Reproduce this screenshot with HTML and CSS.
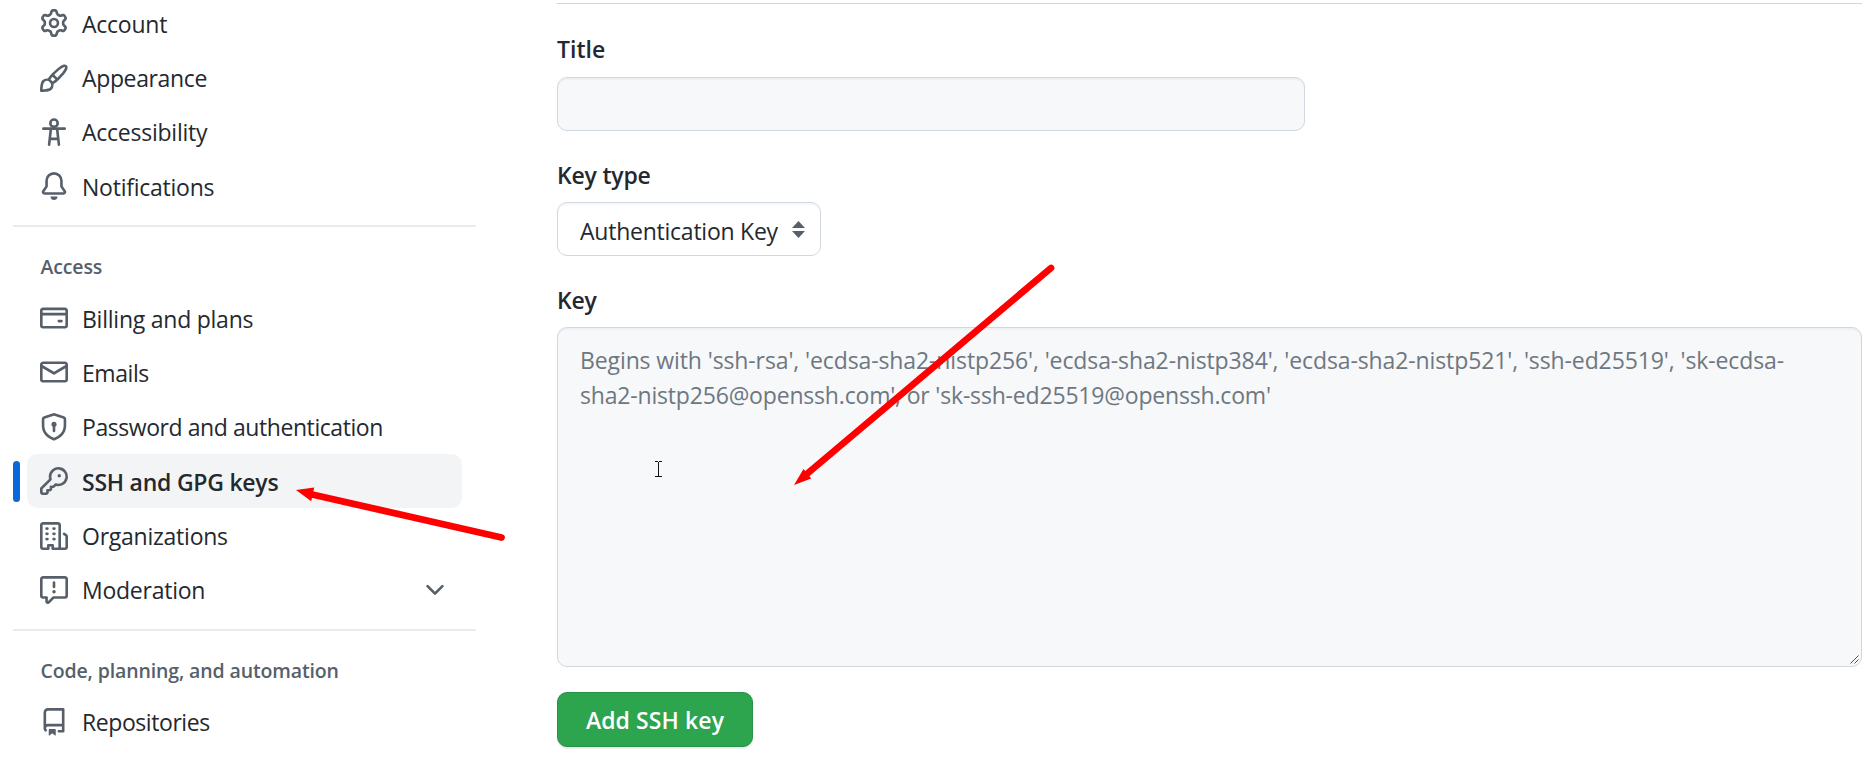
FILE: index.html
```html
<!DOCTYPE html>
<html lang="en">
<head>
<meta charset="utf-8">
<title>SSH and GPG keys</title>
<link rel="stylesheet" href="styles.css">
</head>
<body>
<div class="page">
  <nav class="sidebar">
    <ul class="nav-list">
      <li class="nav-item"><svg class="icon" viewBox="0 0 16 16"><path d="M8 0a8.2 8.2 0 0 1 .701.031C9.444.095 9.99.645 10.16 1.29l.288 1.107c.018.066.079.158.212.224.231.114.454.243.668.386.123.082.233.09.299.071l1.103-.303c.644-.176 1.392.021 1.82.63.27.385.506.792.704 1.218.315.675.111 1.422-.364 1.891l-.814.806c-.049.048-.098.147-.088.294.016.257.016.515 0 .772-.01.147.038.246.088.294l.814.806c.475.469.679 1.216.364 1.891a7.977 7.977 0 0 1-.704 1.217c-.428.61-1.176.807-1.82.63l-1.102-.302c-.067-.019-.177-.011-.3.071a5.909 5.909 0 0 1-.668.386c-.133.066-.194.158-.211.224l-.29 1.106c-.168.646-.715 1.196-1.458 1.26a8.006 8.006 0 0 1-1.402 0c-.743-.064-1.289-.614-1.458-1.26l-.289-1.106c-.018-.066-.079-.158-.212-.224a5.738 5.738 0 0 1-.668-.386c-.123-.082-.233-.09-.299-.071l-1.103.303c-.644.176-1.392-.021-1.82-.63a8.12 8.12 0 0 1-.704-1.218c-.315-.675-.111-1.422.363-1.891l.815-.806c.05-.048.098-.147.088-.294a6.214 6.214 0 0 1 0-.772c.01-.147-.038-.246-.088-.294l-.815-.806C.635 6.045.431 5.298.746 4.623a7.92 7.92 0 0 1 .704-1.217c.428-.61 1.176-.807 1.82-.63l1.102.302c.067.019.177.011.3-.071.214-.143.437-.272.668-.386.133-.066.194-.158.211-.224l.29-1.106C6.009.645 6.556.095 7.299.03 7.53.01 7.764 0 8 0Zm-.571 1.525c-.036.003-.108.036-.137.146l-.289 1.105c-.147.561-.549.967-.998 1.189-.173.086-.34.183-.5.29-.417.278-.97.423-1.529.27l-1.103-.303c-.109-.03-.175.016-.195.045-.22.312-.412.644-.573.99-.014.031-.021.11.059.19l.815.806c.411.406.562.957.53 1.456a4.709 4.709 0 0 0 0 .582c.032.499-.119 1.05-.53 1.456l-.815.806c-.081.08-.073.159-.059.19.162.346.353.677.573.989.02.03.085.076.195.046l1.102-.303c.56-.153 1.113-.008 1.53.27.161.107.328.204.501.29.447.222.85.629.997 1.189l.289 1.105c.029.109.101.143.137.146a6.6 6.6 0 0 0 1.142 0c.036-.003.108-.036.137-.146l.289-1.105c.147-.561.549-.967.998-1.189.173-.086.34-.183.5-.29.417-.278.97-.423 1.529-.27l1.103.303c.109.029.175-.016.195-.045.22-.313.411-.644.573-.99.014-.031.021-.11-.059-.19l-.815-.806c-.411-.406-.562-.957-.53-1.456a4.709 4.709 0 0 0 0-.582c-.032-.499.119-1.05.53-1.456l.815-.806c.081-.08.073-.159.059-.19a6.464 6.464 0 0 0-.573-.989c-.02-.03-.085-.076-.195-.046l-1.102.303c-.56.153-1.113.008-1.53-.27a4.44 4.44 0 0 0-.501-.29c-.447-.222-.85-.629-.997-1.189l-.289-1.105c-.029-.11-.101-.143-.137-.146a6.6 6.6 0 0 0-1.142 0ZM11 8a3 3 0 1 1-6 0 3 3 0 0 1 6 0ZM9.5 8a1.5 1.5 0 1 0-3.001.001A1.5 1.5 0 0 0 9.5 8Z"/></svg><span class="text">Account</span></li>
      <li class="nav-item"><svg class="icon" viewBox="0 0 16 16"><path d="M11.134 1.535c.7-.509 1.416-.942 2.076-1.155.649-.21 1.463-.267 2.069.34.603.601.568 1.411.368 2.07-.202.668-.624 1.39-1.125 2.096-1.011 1.424-2.496 2.987-3.775 4.249-1.098 1.084-2.132 1.839-3.04 2.3a3.744 3.744 0 0 1-1.055 3.217c-.431.431-1.065.691-1.657.861-.614.177-1.294.287-1.914.357A21.151 21.151 0 0 1 .797 16H.743l.007-.75H.749L.742 16a.75.75 0 0 1-.743-.742l.743-.008-.742.007v-.054a21.25 21.25 0 0 1 .13-2.284c.067-.647.187-1.287.358-1.914.17-.591.43-1.226.86-1.657a3.746 3.746 0 0 1 3.227-1.054c.466-.893 1.225-1.907 2.314-2.982 1.271-1.255 2.833-2.75 4.246-3.777ZM1.62 13.089c-.051.464-.086.929-.104 1.395.466-.018.932-.053 1.396-.104a10.511 10.511 0 0 0 1.668-.309c.526-.151.856-.325 1.011-.48a2.25 2.25 0 1 0-3.182-3.182c-.155.155-.329.485-.48 1.01a10.515 10.515 0 0 0-.309 1.67Zm10.396-10.34c-1.224.89-2.605 2.189-3.822 3.384l1.718 1.718c1.21-1.205 2.51-2.597 3.387-3.833.47-.662.78-1.227.912-1.662.134-.444.032-.551.009-.575h-.001V1.78c-.014-.014-.113-.113-.548.027-.432.14-.995.462-1.655.942Zm-4.832 7.266-.001.001a9.859 9.859 0 0 0 1.63-1.142L7.155 7.216a9.7 9.7 0 0 0-1.161 1.607c.482.302.889.71 1.19 1.192Z"/></svg><span class="text text-snug">Appearance</span></li>
      <li class="nav-item"><svg class="icon icon-stroke" viewBox="0 0 16 16"><circle cx="8" cy="2.95" r="2.1"/><path d="M1.9 6.1h12.2M6.2 6.3 5.2 15.2M9.8 6.3l1 8.9M5.8 11.9h4.4"/></svg><span class="text">Accessibility</span></li>
      <li class="nav-item"><svg class="icon" viewBox="0 0 16 16"><path d="M8 16a2 2 0 0 0 1.985-1.75c.017-.137-.097-.25-.235-.25h-3.5c-.138 0-.252.113-.235.25A2 2 0 0 0 8 16ZM3 5a5 5 0 0 1 10 0v2.947c0 .05.015.098.042.139l1.703 2.555A1.519 1.519 0 0 1 13.482 13H2.518a1.516 1.516 0 0 1-1.263-2.36l1.703-2.554A.255.255 0 0 0 3 7.947Zm5-3.5A3.5 3.5 0 0 0 4.5 5v2.947c0 .346-.102.683-.294.97l-1.703 2.556a.017.017 0 0 0-.003.01l.001.006c0 .002.002.004.004.006l.006.004.007.001h10.964l.007-.001.006-.004.004-.006.001-.007a.017.017 0 0 0-.003-.01l-1.703-2.554a1.745 1.745 0 0 1-.294-.97V5A3.5 3.5 0 0 0 8 1.5Z"/></svg><span class="text">Notifications</span></li>
    </ul>
    <hr class="divider">
    <h3 class="nav-heading">Access</h3>
    <ul class="nav-list">
      <li class="nav-item"><svg class="icon" viewBox="0 0 16 16"><path d="M10.75 9a.75.75 0 0 0 0 1.5h1.5a.75.75 0 0 0 0-1.5h-1.5Z"/><path d="M0 3.75C0 2.784.784 2 1.75 2h12.5c.966 0 1.75.784 1.75 1.75v8.5A1.75 1.75 0 0 1 14.25 14H1.75A1.75 1.75 0 0 1 0 12.25ZM14.5 6.5h-13v5.75c0 .138.112.25.25.25h12.5a.25.25 0 0 0 .25-.25Zm0-2.75a.25.25 0 0 0-.25-.25H1.75a.25.25 0 0 0-.25.25V5h13Z"/></svg><span class="text">Billing and plans</span></li>
      <li class="nav-item"><svg class="icon" viewBox="0 0 16 16"><path d="M1.75 2h12.5c.966 0 1.75.784 1.75 1.75v8.5A1.75 1.75 0 0 1 14.25 14H1.75A1.75 1.75 0 0 1 0 12.25v-8.5C0 2.784.784 2 1.75 2ZM1.5 5.809v6.442c0 .138.112.25.25.25h12.5a.25.25 0 0 0 .25-.25V5.809L8.38 9.397a.75.75 0 0 1-.76 0L1.5 5.809Zm13-1.74v-.32a.25.25 0 0 0-.25-.25H1.75a.25.25 0 0 0-.25.25v.32L8 7.88Z"/></svg><span class="text text-tight">Emails</span></li>
      <li class="nav-item"><svg class="icon" viewBox="0 0 16 16"><path d="m8.533.133 5.25 1.68A1.75 1.75 0 0 1 15 3.48V7c0 1.566-.32 3.182-1.303 4.682-.983 1.498-2.585 2.813-5.032 3.855a1.697 1.697 0 0 1-1.33 0c-2.447-1.042-4.049-2.357-5.032-3.855C1.32 10.182 1 8.566 1 7V3.48a1.755 1.755 0 0 1 1.217-1.667l5.25-1.68a1.748 1.748 0 0 1 1.066 0Zm-.61 1.429.001.001-5.25 1.68a.251.251 0 0 0-.174.237V7c0 1.36.275 2.666 1.057 3.859.784 1.194 2.121 2.342 4.366 3.298a.196.196 0 0 0 .154 0c2.245-.957 3.582-2.103 4.366-3.297C13.225 9.666 13.5 8.358 13.5 7V3.48a.25.25 0 0 0-.174-.238l-5.25-1.68a.25.25 0 0 0-.153 0ZM9.5 6.5c0 .536-.286 1.032-.75 1.3v2.45a.75.75 0 0 1-1.5 0V7.8A1.5 1.5 0 1 1 9.5 6.5Z"/></svg><span class="text text-tight">Password and authentication</span></li>
      <li class="nav-item nav-item-active"><svg class="icon" viewBox="0 0 16 16"><path d="M10.5 0a5.499 5.499 0 1 1-1.288 10.848l-.932.932a.749.749 0 0 1-.53.22H7v.75a.749.749 0 0 1-.22.53l-.5.5a.749.749 0 0 1-.53.22H5v.75a.749.749 0 0 1-.22.53l-.5.5a.749.749 0 0 1-.53.22h-2A1.75 1.75 0 0 1 0 14.25v-2c0-.199.079-.389.22-.53l4.932-4.932A5.5 5.5 0 0 1 10.5 0Zm-4 5.5c-.001.431.069.86.205 1.269a.75.75 0 0 1-.181.768L1.5 12.56v1.69c0 .138.112.25.25.25h1.69l.06-.06v-1.19a.75.75 0 0 1 .75-.75h1.19l.06-.06v-1.19a.75.75 0 0 1 .75-.75h1.19l1.023-1.025a.75.75 0 0 1 .768-.18A4 4 0 1 0 6.5 5.5ZM11 6a1 1 0 1 1 0-2 1 1 0 0 1 0 2Z"/></svg><span class="text">SSH and GPG keys</span></li>
      <li class="nav-item"><svg class="icon" viewBox="0 0 16 16"><path d="M1.75 16A1.75 1.75 0 0 1 0 14.25V1.75C0 .784.784 0 1.75 0h8.5C11.216 0 12 .784 12 1.75v12.5c0 .085-.006.168-.018.25h2.268a.25.25 0 0 0 .25-.25V8.285a.25.25 0 0 0-.111-.208l-1.055-.703a.749.749 0 1 1 .832-1.248l1.055.703c.487.325.779.871.779 1.456v5.965A1.75 1.75 0 0 1 14.25 16h-3.5a.766.766 0 0 1-.197-.026c-.099.017-.2.026-.303.026h-3a.75.75 0 0 1-.75-.75V14h-1v1.25a.75.75 0 0 1-.75.75Zm-.25-1.75c0 .138.112.25.25.25H4v-1.25a.75.75 0 0 1 .75-.75h2.5a.75.75 0 0 1 .75.75v1.25h2.25a.25.25 0 0 0 .25-.25V1.75a.25.25 0 0 0-.25-.25h-8.5a.25.25 0 0 0-.25.25ZM3.75 6h.5a.75.75 0 0 1 0 1.5h-.5a.75.75 0 0 1 0-1.5ZM3 3.75A.75.75 0 0 1 3.75 3h.5a.75.75 0 0 1 0 1.5h-.5A.75.75 0 0 1 3 3.75Zm4 3A.75.75 0 0 1 7.75 6h.5a.75.75 0 0 1 0 1.5h-.5A.75.75 0 0 1 7 6.75ZM7.75 3h.5a.75.75 0 0 1 0 1.5h-.5a.75.75 0 0 1 0-1.5ZM3 9.75A.75.75 0 0 1 3.75 9h.5a.75.75 0 0 1 0 1.5h-.5A.75.75 0 0 1 3 9.75ZM7.75 9h.5a.75.75 0 0 1 0 1.5h-.5a.75.75 0 0 1 0-1.5Z"/></svg><span class="text">Organizations</span></li>
      <li class="nav-item"><svg class="icon" viewBox="0 0 16 16"><path d="M0 1.75C0 .784.784 0 1.75 0h12.5C15.216 0 16 .784 16 1.75v9.5A1.75 1.75 0 0 1 14.25 13H8.06l-2.573 2.573A1.458 1.458 0 0 1 3 14.543V13H1.75A1.75 1.75 0 0 1 0 11.25Zm1.75-.25a.25.25 0 0 0-.25.25v9.5c0 .138.112.25.25.25h2a.75.75 0 0 1 .75.75v2.19l2.72-2.72a.749.749 0 0 1 .53-.22h6.5a.25.25 0 0 0 .25-.25v-9.5a.25.25 0 0 0-.25-.25Zm7 2.25v2.5a.75.75 0 0 1-1.5 0v-2.5a.75.75 0 0 1 1.5 0ZM9 9a1 1 0 1 1-2 0 1 1 0 0 1 2 0Z"/></svg><span class="text">Moderation</span><svg class="icon chevron" viewBox="0 0 16 16"><path d="M12.78 5.22a.749.749 0 0 1 0 1.06l-4.25 4.25a.749.749 0 0 1-1.06 0L3.22 6.28a.749.749 0 1 1 1.06-1.06L8 8.939l3.72-3.719a.749.749 0 0 1 1.06 0Z"/></svg></li>
    </ul>
    <hr class="divider">
    <h3 class="nav-heading">Code, planning, and automation</h3>
    <ul class="nav-list">
      <li class="nav-item"><svg class="icon" viewBox="0 0 16 16"><path d="M2 2.5A2.5 2.5 0 0 1 4.5 0h8.75a.75.75 0 0 1 .75.75v12.5a.75.75 0 0 1-.75.75h-2.5a.75.75 0 0 1 0-1.5h1.75v-2h-8a1 1 0 0 0-.714 1.7.75.75 0 1 1-1.072 1.05A2.495 2.495 0 0 1 2 11.5Zm10.500-1h-8a1 1 0 0 0-1 1v6.708A2.486 2.486 0 0 1 4.500 9h8ZM5 12.250a.25.25 0 0 1 .25-.25h3.500a.25.25 0 0 1 .25.25v3.250a.25.25 0 0 1-.4.2l-1.450-1.087a.249.249 0 0 0-.3 0L5.400 15.700a.25.25 0 0 1-.4-.2Z"/></svg><span class="text text-tight">Repositories</span></li>
    </ul>
  </nav>
  <main class="content">
    <div class="label label-first">Title</div>
    <div class="text-input"></div>
    <div class="label">Key type</div>
    <div class="select"><span class="text">Authentication Key</span>
      <svg class="select-arrows" viewBox="0 0 13 17"><path d="M6.5 0 13 7H0ZM6.5 17 0 10h13Z"/></svg></div>
    <div class="label">Key</div>
    <div class="textarea"><span class="hint">Begins with 'ssh-rsa', 'ecdsa-sha2-nistp256', 'ecdsa-sha2-nistp384', 'ecdsa-sha2-nistp521', 'ssh-ed25519', 'sk-ecdsa-</span><br><span class="hint hint-last">sha2-nistp256@openssh.com', or 'sk-ssh-ed25519@openssh.com'</span>
      <svg class="grip" viewBox="0 0 9 9"><path d="M.5 8.500l8-8M4.500 8.500l4-4"/></svg></div>
    <button class="submit" type="button">Add SSH key</button>
  </main>
  <svg class="overlay" viewBox="0 0 1863 760">
    <path class="arrow-line" d="M501.500 537.500 310 494M1051 268 805 475.500"/>
    <path class="arrow-head" d="M296 490l18.200-2.500-3 13.700ZM794 485l9.500-16 7.800 9.500Z"/>
    <path class="cursor" d="M655 461.500h3M659 461.500h3M658.500 462v15M655 476.500h3M659 476.500h3"/>
  </svg>
</div>
</body>
</html>
```

FILE: styles.css
```css
* { box-sizing: border-box; }
body {
  margin: 0;
  background: #fff;
  color: #24292f;
  font-family: "Open Sans", "Noto Sans", sans-serif;
  font-size: 23px;
}
.page {
  position: relative;
  display: flex;
  width: 1863px;
  height: 760px;
  overflow: hidden;
}
.sidebar { width: 557px; padding-left: 13px; }
.nav-list { margin: 0; padding: 0 0 0 14px; list-style: none; }
.nav-list:first-child { margin-top: -4px; }
.nav-item {
  position: relative;
  display: flex;
  align-items: center;
  width: 435px;
  height: 54.35px;
  padding: 0 13px;
  gap: 14px;
  border-radius: 10px;
  white-space: nowrap;
}
.text { padding-top: 1px; letter-spacing: -0.24px; }
.text-snug { letter-spacing: -0.36px; }
.text-tight { letter-spacing: -0.43px; }
.nav-item-active { background: #f3f4f6; font-weight: 600; }
.nav-item-active::before {
  content: "";
  position: absolute;
  left: -14px;
  top: 7px;
  width: 7px;
  height: 41px;
  border-radius: 4px;
  background: #0969da;
}
.icon { width: 28px; height: 28px; fill: #57606a; flex: none; }
.icon-stroke { fill: none; stroke: #57606a; stroke-width: 1.5; stroke-linecap: round; }
.chevron { margin-left: auto; }
.divider { width: 463px; height: 2px; margin: 12px 0 0; border: 0; background: #e8ecf0; }
.nav-heading {
  height: 63.6px;
  margin: 0;
  padding: 24px 0 0 27.5px;
  color: #57606a;
  font-size: 19.5px;
  font-weight: 600;
  line-height: 32px;
  letter-spacing: -0.13px;
}
.content { width: 1305px; margin-top: 3px; border-top: 1px solid #d0d7de; }
.label {
  height: 71px;
  padding-top: 27px;
  font-weight: 600;
  line-height: 34px;
  letter-spacing: -0.2px;
}
.label-first { height: 73px; padding-top: 28px; letter-spacing: 0; }
.text-input, .select, .textarea {
  border: 1px solid #d0d7de;
  border-radius: 10px;
  background: #f6f8fa;
  box-shadow: inset 0 2px 0 rgba(208, 215, 222, 0.2);
}
.text-input { width: 748px; height: 54px; }
.select {
  display: flex;
  align-items: center;
  justify-content: space-between;
  width: 264px;
  height: 54px;
  padding: 0 15px 0 22px;
  background: #fff;
  white-space: nowrap;
}
.select .text { padding-top: 3px; }
.select-arrows { width: 13px; height: 17px; fill: #57606a; }
.textarea {
  position: relative;
  height: 340px;
  padding: 15px 22px;
  color: #6e7781;
  line-height: 35px;
  white-space: nowrap;
}
.hint { letter-spacing: -0.11px; }
.hint-last { letter-spacing: -0.18px; }
.grip { position: absolute; right: 2px; bottom: 2px; width: 9px; height: 9px; fill: none; stroke: #555; }
.submit {
  display: block;
  width: 196px;
  height: 55px;
  margin-top: 25px;
  padding: 0;
  border: 1px solid #2a8f47;
  border-radius: 10px;
  background: #2da44e;
  color: #fff;
  font: inherit;
  font-weight: 600;
  letter-spacing: 0.1px;
  white-space: nowrap;
  box-shadow: 0 2px 0 rgba(27, 31, 36, 0.08);
}
.overlay { position: absolute; left: 0; top: 0; width: 1863px; height: 760px; pointer-events: none; }
.arrow-line { fill: none; stroke: #f00; stroke-width: 6.8; stroke-linecap: round; }
.arrow-head { fill: #f00; }
.cursor { fill: none; stroke: #111; stroke-width: 1; }
```
